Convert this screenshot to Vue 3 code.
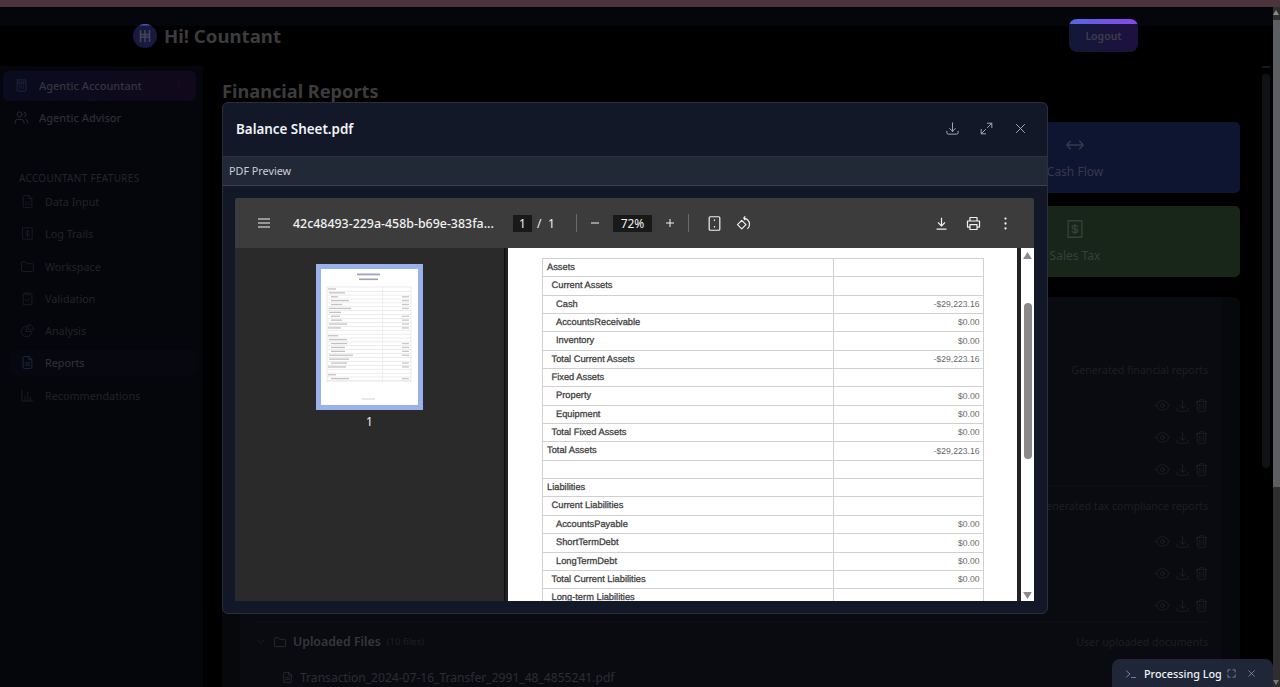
<template>
  <div class="strip"></div>
  <div class="page">
    <div class="shell">
      <header class="topbar">
        <div class="brand">
          <svg class="brand-logo" viewBox="0 0 24 24">
            <circle cx="12" cy="12" r="12" fill="#17193f" />
            <path d="M6 1.600a12 12 0 0 1 12 0z" fill="#4f55c0" />
            <path d="M7.500 6v12M12 6v12M16.500 6v12M7.500 10.500h9M7.500 13h9" stroke="#43445a" stroke-width="1.500" fill="none" />
          </svg>
          <span class="brand-name">Hi! Countant</span>
        </div>
        <button class="logout">Logout</button>
      </header>

      <div class="body">
        <aside class="sidebar">
          <div v-for="item in topNav" :key="item.label" class="nav-top" :class="{ active: item.active }">
            <svg class="icon nav-icon" viewBox="0 0 24 24"><path :d="icons[item.icon]" /></svg>
            <span>{{ item.label }}</span>
            <svg v-if="item.active" class="icon nav-chevron" viewBox="0 0 24 24"><path d="m9 5 7 7-7 7" /></svg>
          </div>
          <div class="nav-section">ACCOUNTANT FEATURES</div>
          <div v-for="item in features" :key="item.label" class="nav-item" :class="{ active: item.active }">
            <svg class="icon nav-icon" viewBox="0 0 24 24"><path :d="icons[item.icon]" /></svg>
            <span>{{ item.label }}</span>
          </div>
        </aside>

        <main class="main">
          <div class="content">
            <h1 class="page-title">Financial Reports</h1>
            <div class="cards">
              <div class="card"></div>
              <div class="card"></div>
              <div class="card blue">
                <svg class="icon card-icon" viewBox="0 0 24 24"><path d="M7 8l-4 4 4 4M17 8l4 4-4 4M3 12h18" /></svg>
                <span>Cash Flow</span>
              </div>
              <div class="card"></div>
              <div class="card"></div>
              <div class="card green">
                <svg class="icon card-icon" viewBox="0 0 24 24"><path :d="icons.dollarDoc" /></svg>
                <span>Sales Tax</span>
              </div>
            </div>

            <section class="panel">
              <div class="panel-inner">
                <div v-for="group in groups" :key="group.note" class="group">
                  <div class="group-head">
                    <template v-if="group.title">
                      <svg class="icon group-chevron" viewBox="0 0 24 24"><path d="m5 9 7 7 7-7" /></svg>
                      <svg class="icon group-folder" viewBox="0 0 24 24"><path :d="icons.folder" /></svg>
                      <span class="group-title">{{ group.title }}</span>
                      <span class="group-count">{{ group.count }}</span>
                    </template>
                    <span class="group-note">{{ group.note }}</span>
                  </div>
                  <div v-for="row in group.rows" :key="row" class="file-row">
                    <div class="actions">
                      <svg class="icon" viewBox="0 0 24 24"><path :d="icons.eye" /></svg>
                      <svg class="icon" viewBox="0 0 24 24"><path :d="icons.download" /></svg>
                      <svg class="icon" viewBox="0 0 24 24"><path :d="icons.trash" /></svg>
                    </div>
                  </div>
                  <div v-if="group.file" class="file-row uploaded">
                    <svg class="icon file-icon" viewBox="0 0 24 24"><path :d="icons.docText" /></svg>
                    <span>{{ group.file }}</span>
                  </div>
                </div>
              </div>
            </section>
          </div>
          <div class="main-scroll">
            <div class="main-scroll-cap"></div>
            <div class="main-scroll-thumb"></div>
          </div>
        </main>
      </div>
    </div>

    <div class="page-scroll">
      <div class="page-scroll-up"></div>
      <div class="page-scroll-thumb"></div>
      <div class="page-scroll-arrow"></div>
    </div>

    <div class="modal">
      <div class="modal-head">
        <h2 class="modal-title">Balance Sheet.pdf</h2>
        <div class="modal-actions">
          <svg class="icon" viewBox="0 0 24 24"><path :d="icons.download" /></svg>
          <svg class="icon" viewBox="0 0 24 24"><path d="M13.500 3.500h7v7M20.500 3.500l-7 7M10.500 20.500h-7v-7M3.500 20.500l7-7" /></svg>
          <svg class="icon" viewBox="0 0 24 24"><path d="M5.500 5.500l13 13M18.500 5.500l-13 13" /></svg>
        </div>
      </div>
      <div class="modal-band">PDF Preview</div>

      <div class="modal-body">
        <div class="viewer">
          <div class="toolbar">
            <div class="tb-left">
              <svg class="tb-icon menu" viewBox="0 0 24 24"><path d="M3 6h18M3 12h18M3 18h18" /></svg>
              <span class="doc-name">42c48493-229a-458b-b69e-383fa...</span>
            </div>
            <div class="tb-center">
              <span class="tb-box page-box">1</span>
              <span class="tb-slash">/</span>
              <span class="tb-total">1</span>
              <span class="tb-sep first"></span>
              <svg class="tb-icon small minus" viewBox="0 0 24 24"><path d="M4 12h16" /></svg>
              <span class="tb-box zoom-box">72%</span>
              <svg class="tb-icon small plus" viewBox="0 0 24 24"><path d="M4 12h16M12 4v16" /></svg>
              <span class="tb-sep second"></span>
              <svg class="tb-icon fit" viewBox="0 0 24 24"><rect x="4.500" y="2.500" width="15" height="19" rx="1.500" /><path d="M12 6.500v2M12 15.500v2" /></svg>
              <svg class="tb-icon rotate" viewBox="0 0 24 24"><path d="M9.500 7.500 3.500 13.500l6 6 6-6zM12 4.500a8.500 8.500 0 0 1 8.500 8.500 8.500 8.500 0 0 1-3 6.500M12 4.500l2.500-2.500M12 4.500 14.500 7" /></svg>
            </div>
            <div class="tb-right">
              <svg class="tb-icon" viewBox="0 0 24 24"><path d="M12 4v11M7 10.500l5 5 5-5M5 20h14" /></svg>
              <svg class="tb-icon" viewBox="0 0 24 24"><path d="M7 8V3.500h10V8M7 17H3.500V8.500h17V17H17M7 13.500h10v7H7z" /></svg>
              <svg class="tb-icon dots" viewBox="0 0 24 24"><circle cx="12" cy="5" r="1.600" /><circle cx="12" cy="12" r="1.600" /><circle cx="12" cy="19" r="1.600" /></svg>
            </div>
          </div>

          <div class="viewer-body">
            <div class="thumbs">
              <div class="thumb">
                <svg class="thumb-page" viewBox="0 0 97 136">
                  <rect x="36" y="4.500" width="23" height="1.800" fill="#9ea3c0" />
                  <rect x="38" y="9.500" width="19" height="1.600" fill="#a0a0a0" />
                  <rect x="6" y="18" width="84" height="94" fill="none" stroke="#dcdcdc" stroke-width="0.600" />
                  <rect x="61" y="18" width="0.500" height="94" fill="#e2e2e2" />
                  <g v-for="(w, n) in thumbRows" :key="n">
                    <rect x="6" :y="21.900 + n * 3.900" width="84" height="0.600" fill="#dedede" />
                    <rect :x="w[0]" :y="19.300 + n * 3.900" :width="w[1]" height="1.300" fill="#c2c2c2" />
                    <rect v-if="w[2]" x="81" :y="19.300 + n * 3.900" width="7" height="1.300" fill="#c8c8c8" />
                  </g>
                  <rect x="41" y="129.500" width="13" height="1" fill="#d2d2d2" />
                </svg>
              </div>
              <div class="thumb-num">1</div>
            </div>
            <div class="doc-area">
              <div class="doc-page">
                <table class="sheet">
                  <tbody>
                    <tr v-for="(row, i) in sheet" :key="i">
                      <td class="sheet-label" :class="'lv' + row.level">{{ row.label }}</td>
                      <td class="sheet-value">{{ row.value }}</td>
                    </tr>
                  </tbody>
                </table>
              </div>
              <div class="doc-scroll">
                <svg class="doc-arrow" viewBox="0 0 10 8"><path d="M5 0l5 8H0z" /></svg>
                <div class="doc-track"><div class="doc-thumb"></div></div>
                <svg class="doc-arrow" viewBox="0 0 10 8"><path d="M0 0h10L5 8z" /></svg>
              </div>
            </div>
          </div>
        </div>
      </div>
    </div>

    <div class="log">
      <svg class="icon log-term" viewBox="0 0 24 24"><path d="m3 6 7 6-7 6M13 19h8" /></svg>
      <span class="log-text">Processing Log</span>
      <svg class="icon log-btn" viewBox="0 0 24 24"><path d="M4 9V4h5M15 4h5v5M20 15v5h-5M9 20H4v-5" /></svg>
      <svg class="icon log-btn" viewBox="0 0 24 24"><path d="M6 6l12 12M18 6 6 18" /></svg>
    </div>
  </div>
</template>

<script setup>
const icons = {
  calculator: 'M6 3h12a1 1 0 0 1 1 1v16a1 1 0 0 1-1 1H6a1 1 0 0 1-1-1V4a1 1 0 0 1 1-1zM8 6.500h8v3H8zM8.500 13h1M11.500 13h1M14.500 13h1M8.500 16h1M11.500 16h1M14.500 16h1',
  users: 'M16 21v-2a4 4 0 0 0-4-4H6a4 4 0 0 0-4 4v2M13 7a4 4 0 1 1-8 0 4 4 0 0 1 8 0zM22 21v-2a4 4 0 0 0-3-3.870M16 3.130a4 4 0 0 1 0 7.750',
  dataDoc: 'M14 2.500H7a2 2 0 0 0-2 2v15a2 2 0 0 0 2 2h10a2 2 0 0 0 2-2V7.500zM14 2.500V7.500h5M9 13h1.500M13.500 13H15M9 17h1.500M13.500 17H15',
  dollarDoc: 'M4.500 3h15v18h-15zM12 7v10M15 9.500c-.600-1-1.700-1.500-3-1.500-1.700 0-3 .800-3 2s1.300 1.800 3 2 3 .800 3 2-1.300 2-3 2c-1.300 0-2.400-.500-3-1.500',
  folder: 'M2.500 18.500V6a1.500 1.500 0 0 1 1.500-1.500h5l2.500 3H20a1.500 1.500 0 0 1 1.500 1.500v9.500A1.500 1.500 0 0 1 20 20H4a1.500 1.500 0 0 1-1.500-1.500z',
  clipboard: 'M9 4H6.500A1.500 1.500 0 0 0 5 5.500v15A1.500 1.500 0 0 0 6.500 22h11a1.500 1.500 0 0 0 1.500-1.500v-15A1.500 1.500 0 0 0 17.500 4H15M9 3h6v3H9zM9 14l2 2 4-4.500',
  pie: 'M10.500 5a8.500 8.500 0 1 0 8.500 8.500h-8.500zM14 2.500A7.500 7.500 0 0 1 21.500 10H14z',
  docText: 'M14 2.500H7a2 2 0 0 0-2 2v15a2 2 0 0 0 2 2h10a2 2 0 0 0 2-2V7.500zM14 2.500V7.500h5M8.500 12.500h7M8.500 16h7',
  chart: 'M3 3v18h18M8 20v-7M12.500 20V7M17 20v-5',
  eye: 'M2.036 12.322a1.012 1.012 0 0 1 0-.639C3.423 7.51 7.36 4.5 12 4.5c4.638 0 8.573 3.007 9.963 7.178.07.207.07.431 0 .639C20.577 16.49 16.64 19.5 12 19.5c-4.638 0-8.573-3.007-9.963-7.178ZM15 12a3 3 0 1 1-6 0 3 3 0 0 1 6 0Z',
  download: 'M3 16.500v2.250A2.250 2.250 0 0 0 5.250 21h13.500A2.250 2.250 0 0 0 21 18.750V16.500M16.500 12 12 16.500m0 0L7.500 12m4.500 4.500V3',
  trash: 'M14.74 9l-.346 9m-4.788 0L9.26 9m9.968-3.21c.342.052.682.107 1.022.166m-1.022-.165L18.16 19.673a2.25 2.25 0 0 1-2.244 2.077H8.084a2.25 2.25 0 0 1-2.244-2.077L4.772 5.79m14.456 0a48.108 48.108 0 0 0-3.478-.397m-12 .562c.34-.059.68-.114 1.022-.165m0 0a48.11 48.11 0 0 1 3.478-.397m7.5 0v-.916c0-1.18-.91-2.164-2.09-2.201a51.964 51.964 0 0 0-3.32 0c-1.18.037-2.09 1.022-2.09 2.201v.916m7.5 0a48.667 48.667 0 0 0-7.5 0'
}

const topNav = [
  { label: 'Agentic Accountant', icon: 'calculator', active: true },
  { label: 'Agentic Advisor', icon: 'users' }
]

const features = [
  { label: 'Data Input', icon: 'dataDoc' },
  { label: 'Log Trails', icon: 'dollarDoc' },
  { label: 'Workspace', icon: 'folder' },
  { label: 'Validation', icon: 'clipboard' },
  { label: 'Analysis', icon: 'pie' },
  { label: 'Reports', icon: 'docText', active: true },
  { label: 'Recommendations', icon: 'chart' }
]

const groups = [
  { note: 'Generated financial reports', rows: [1, 2, 3] },
  { note: 'Generated tax compliance reports', rows: [1, 2, 3] },
  {
    title: 'Uploaded Files',
    count: '(10 files)',
    note: 'User uploaded documents',
    rows: [],
    file: 'Transaction_2024-07-16_Transfer_2991_48_4855241.pdf'
  }
]

// the preview page: [left, width, has a value]
const thumbRows = [
  [7, 8, 0], [8, 16, 0], [10, 7, 1], [10, 18, 1], [10, 11, 1], [8, 22, 1],
  [8, 12, 0], [10, 9, 1], [10, 11, 1], [8, 18, 1], [7, 13, 1], [7, 0, 0],
  [7, 10, 0], [8, 18, 0], [10, 16, 1], [10, 14, 1], [10, 14, 1], [8, 24, 1],
  [8, 20, 0], [10, 16, 1], [7, 18, 1], [7, 0, 0], [7, 8, 0], [10, 18, 1]
]

const sheet = [
  { label: 'Assets', level: 0, value: '' },
  { label: 'Current Assets', level: 1, value: '' },
  { label: 'Cash', level: 2, value: '-$29,223.16' },
  { label: 'AccountsReceivable', level: 2, value: '$0.00' },
  { label: 'Inventory', level: 2, value: '$0.00' },
  { label: 'Total Current Assets', level: 1, value: '-$29,223.16' },
  { label: 'Fixed Assets', level: 1, value: '' },
  { label: 'Property', level: 2, value: '$0.00' },
  { label: 'Equipment', level: 2, value: '$0.00' },
  { label: 'Total Fixed Assets', level: 1, value: '$0.00' },
  { label: 'Total Assets', level: 0, value: '-$29,223.16' },
  { label: '', level: 0, value: '' },
  { label: 'Liabilities', level: 0, value: '' },
  { label: 'Current Liabilities', level: 1, value: '' },
  { label: 'AccountsPayable', level: 2, value: '$0.00' },
  { label: 'ShortTermDebt', level: 2, value: '$0.00' },
  { label: 'LongTermDebt', level: 2, value: '$0.00' },
  { label: 'Total Current Liabilities', level: 1, value: '$0.00' },
  { label: 'Long-term Liabilities', level: 1, value: '' }
]
</script>

<style>
html,
body {
  margin: 0;
  background: #000;
  overflow: hidden;
}
</style>

<style scoped>
* {
  box-sizing: border-box;
}

.icon {
  fill: none;
  stroke: currentColor;
  stroke-width: 1.5;
  stroke-linecap: round;
  stroke-linejoin: round;
  flex: none;
}

.strip {
  height: 7px;
  background: #4c343c;
}

.page {
  position: relative;
  display: flex;
  height: 680px;
  overflow: hidden;
  font-family: "Noto Sans", "Open Sans", sans-serif;
  background: #000;
}

.shell {
  flex: 1;
  min-width: 0;
}

.page-scroll {
  width: 7px;
  background: #2e2e2e;
  position: relative;
  padding-top: 13px;
}

.page-scroll-up {
  position: absolute;
  top: 3px;
  left: 0;
  border-left: 3.5px solid transparent;
  border-right: 3.5px solid transparent;
  border-bottom: 5px solid #8a8a8a;
}

.page-scroll-thumb {
  height: 467px;
  background: #5c5e62;
}

.page-scroll-arrow {
  position: absolute;
  bottom: 2px;
  left: 0;
  border-left: 3.5px solid transparent;
  border-right: 3.5px solid transparent;
  border-top: 5px solid #777;
}

/* header */
.topbar {
  height: 59px;
  display: flex;
  justify-content: space-between;
  align-items: flex-start;
  padding: 12px 135px 0 133px;
  background: linear-gradient(#05060c 19px, #000 19px);
}

.brand {
  display: flex;
  align-items: center;
  gap: 7px;
  margin-top: 4px;
}

.brand-logo {
  width: 24px;
  height: 24px;
}

.brand-name {
  font-size: 18.6px;
  font-weight: 700;
  color: #3c3c3e;
}

.logout {
  position: relative;
  width: 69px;
  height: 33px;
  border: 0;
  border-radius: 8px;
  padding: 0;
  overflow: hidden;
  font: 600 10.5px "Noto Sans", sans-serif;
  color: #3d3d4a;
  background: linear-gradient(90deg, #121838, #1e1040);
}

.logout::before {
  content: "";
  position: absolute;
  left: 0;
  right: 0;
  top: 0;
  height: 5px;
  background: linear-gradient(90deg, #5468e0, #8a46e8);
}

/* sidebar + main */
.body {
  display: flex;
  height: 621px;
}

.sidebar {
  width: 203px;
  flex: none;
  padding: 5px 7px 0 3px;
  background: #05060b;
}

.nav-top {
  display: flex;
  align-items: center;
  height: 30px;
  padding: 0 0 2px 11px;
  gap: 10px;
  margin-bottom: 2px;
  font-size: 11px;
  font-weight: 500;
  color: #2c2d36;
  border-radius: 6px;
}

.nav-top.active {
  background: linear-gradient(90deg, #0a0b1e, #11091b);
  color: #34353e;
}

.nav-top .nav-icon {
  width: 15px;
  height: 15px;
}

.nav-top.active .nav-icon {
  color: #20263e;
}

.nav-chevron {
  width: 10px;
  height: 10px;
  margin-left: auto;
  margin-right: 12px;
  color: #1c1c28;
}

.nav-section {
  margin: 36px 0 1.5px 16px;
  height: 18px;
  line-height: 18px;
  font-size: 10px;
  letter-spacing: 0.3px;
  color: #24252c;
}

.nav-item {
  display: flex;
  align-items: center;
  gap: 10px;
  height: 26px;
  margin: 0 0 6.25px 7px;
  padding-left: 10px;
  font-size: 10.8px;
  color: #212228;
  border-radius: 6px;
}

.nav-item .nav-icon {
  width: 15px;
  height: 15px;
  color: #1c1d24;
}

.nav-item.active {
  background: #07080f;
  color: #32333c;
}

.nav-item.active .nav-icon {
  color: #1d2a44;
}

.main {
  flex: 1;
  min-width: 0;
  display: flex;
  gap: 22px;
  padding: 0 3px 0 19px;
}

.content {
  flex: 1;
  min-width: 0;
}

.page-title {
  margin: 12px 0 18px;
  height: 26px;
  line-height: 26px;
  font-size: 18.2px;
  font-weight: 700;
  color: #3c3c3e;
}

.cards {
  display: grid;
  grid-template-columns: repeat(3, 1fr);
  grid-auto-rows: 71px;
  gap: 13px 14px;
}

.card {
  display: flex;
  flex-direction: column;
  align-items: center;
  justify-content: center;
  gap: 7px;
  padding-bottom: 2px;
  border-radius: 5px;
  font-size: 12px;
}

.card.blue {
  background: #0e1530;
  color: #363a4a;
}

.card.green {
  background: #18261a;
  color: #35403a;
}

.card-icon {
  width: 22px;
  height: 22px;
}

.panel {
  margin-top: 20px;
  padding: 0 18px;
  background: #07080c;
  border-radius: 6px;
}

.panel-inner {
  padding: 54px 14px 0 15px;
  background: #0a0b10;
  min-height: 400px;
}

.group {
  border-bottom: 1px solid #0e0f15;
  margin-bottom: 1px;
}

.group-head {
  height: 38px;
  display: flex;
  align-items: center;
  padding-bottom: 1px;
}

.group-chevron {
  width: 11px;
  height: 11px;
  color: #25262c;
  margin-right: 7px;
}

.group-folder {
  width: 14px;
  height: 14px;
  color: #2a2b31;
  margin-right: 6px;
}

.group-title {
  font-size: 12.3px;
  font-weight: 600;
  color: #35363c;
}

.group-count {
  margin-left: 6px;
  font-size: 9.5px;
  color: #1e1f25;
}

.group-note {
  margin-left: auto;
  font-size: 10.6px;
  color: #1d1e23;
}

.file-row {
  height: 32px;
  display: flex;
  align-items: center;
}

.actions {
  margin-left: auto;
  margin-right: -1px;
  display: flex;
  gap: 4.5px;
  color: #1e1f24;
}

.actions .icon {
  width: 15px;
  height: 15px;
}

.uploaded {
  padding-left: 26px;
  gap: 6px;
  font-size: 12.08px;
  color: #2c2d33;
}

.file-icon {
  width: 13px;
  height: 13px;
}

.main-scroll {
  width: 8px;
  flex: none;
  display: flex;
  flex-direction: column;
  gap: 6px;
}

.main-scroll-cap {
  height: 2px;
  background: #17181c;
}

.main-scroll-thumb {
  height: 394px;
  background: #101115;
  border-radius: 4px;
}

/* modal */
.modal {
  position: absolute;
  left: 222px;
  top: 95px;
  width: 826px;
  height: 512px;
  display: flex;
  flex-direction: column;
  background: #131829;
  border: 1px solid #2a2f3c;
  border-radius: 6px;
  overflow: hidden;
}

.modal-head {
  height: 53px;
  flex: none;
  display: flex;
  align-items: center;
  justify-content: space-between;
  padding: 0 19.5px 2px 13px;
}

.modal-title {
  margin: 0;
  font-size: 13.4px;
  font-weight: 600;
  color: #f1f3f6;
}

.modal-actions {
  display: flex;
  gap: 19px;
  color: #aab0bc;
}

.modal-actions .icon {
  width: 15px;
  height: 15px;
}

.modal-band {
  height: 30px;
  flex: none;
  display: flex;
  align-items: center;
  padding: 0 0 2px 6px;
  font-size: 10.8px;
  color: #c9ced6;
  background: #222936;
  border-top: 1px solid #2a3140;
  border-bottom: 1px solid #3a4150;
}

.modal-body {
  flex: 1;
  min-height: 0;
  padding: 12px 13px 12px 12px;
}

.viewer {
  height: 403px;
  display: flex;
  flex-direction: column;
  overflow: hidden;
  border-radius: 2px 2px 0 0;
}

.toolbar {
  position: relative;
  height: 50px;
  flex: none;
  display: flex;
  align-items: center;
  justify-content: space-between;
  background: #3c3c3c;
  color: #f1f1f1;
  font-size: 13px;
}

.tb-icon {
  width: 17px;
  height: 17px;
  fill: none;
  stroke: #f1f1f1;
  stroke-width: 1.7;
  stroke-linejoin: round;
  flex: none;
}

.tb-icon.small {
  width: 12px;
  height: 12px;
  stroke-width: 2;
}

.tb-icon.dots {
  fill: #f1f1f1;
  stroke: none;
}

.tb-left {
  display: flex;
  align-items: center;
  padding-left: 21px;
  gap: 21px;
}

.menu {
  width: 16px;
  height: 16px;
}

.doc-name {
  font-weight: 500;
  font-size: 12.4px;
  padding-top: 1px;
}

.tb-center {
  position: absolute;
  left: 278px;
  display: flex;
  align-items: center;
  height: 100%;
}

.tb-box {
  display: flex;
  align-items: center;
  justify-content: center;
  height: 17px;
  background: #191919;
  font-size: 12px;
}

.page-box {
  width: 19px;
}

.tb-slash {
  margin-left: 5px;
  width: 11px;
  font-size: 12px;
}

.tb-total {
  margin-left: -1px;
  width: 23px;
  padding-left: 1px;
  font-size: 12px;
}

.tb-sep {
  width: 1px;
  height: 18px;
  background: #6a6a6a;
}

.tb-sep.first {
  margin-left: 6px;
}

.minus {
  margin: 0 12px;
}

.zoom-box {
  width: 39px;
}

.plus {
  margin: 0 12px;
}

.fit {
  margin-left: 17px;
}

.rotate {
  margin-left: 12px;
}

.tb-right {
  display: flex;
  align-items: center;
  gap: 15px;
  padding-right: 20px;
}

.viewer-body {
  flex: 1;
  min-height: 0;
  display: flex;
}

.thumbs {
  width: 270px;
  flex: none;
  background: #2a2a2a;
  padding-top: 16px;
  border-right: 1px solid #111;
}

.thumb {
  width: 107px;
  height: 146px;
  margin: 0 auto;
  padding: 5px;
  background: #9ab2ec;
}

.thumb-page {
  display: block;
  width: 97px;
  height: 136px;
  background: #fff;
}

.thumb-num {
  margin-top: 3px;
  text-align: center;
  font-size: 12px;
  color: #f1f1f1;
}

.doc-area {
  flex: 1;
  min-width: 0;
  display: flex;
  background: #222;
  padding: 0 0 0 3px;
}

.doc-page {
  width: 509px;
  flex: none;
  background: #fff;
  padding: 10px 0 0 34px;
  overflow: hidden;
}

.sheet {
  width: 442px;
  border-collapse: collapse;
  table-layout: fixed;
  font-family: "Liberation Sans", Arial, sans-serif;
  text-rendering: geometricPrecision;
}

.sheet td {
  height: 18.35px;
  padding: 0 3.5px 0 4px;
  border: 1px solid #d0d0d0;
  line-height: 1;
  white-space: nowrap;
}

.sheet-label {
  width: 291px;
  font-size: 9.3px;
  color: #444;
  -webkit-text-stroke: 0.3px #444;
}

.sheet-label.lv1 {
  padding-left: 8.5px;
}

.sheet-label.lv2 {
  padding-left: 13px;
}

.sheet-value {
  text-align: right;
  font-size: 8.6px;
  color: #666;
}

.doc-scroll {
  width: 13px;
  flex: none;
  margin-left: 4px;
  background: #fff;
  display: flex;
  flex-direction: column;
  align-items: center;
  padding: 4px 0 2px;
  gap: 3px;
}

.doc-arrow {
  width: 9px;
  height: 7px;
  fill: #8a8a8a;
  flex: none;
}

.doc-track {
  flex: 1;
  padding-top: 41px;
}

.doc-thumb {
  width: 8px;
  height: 156px;
  background: #8a8a8a;
  border-radius: 4px;
}

/* processing log */
.log {
  position: absolute;
  right: 7px;
  bottom: 0;
  width: 161px;
  height: 28px;
  display: flex;
  align-items: center;
  padding: 1px 0 0 13px;
  background: #1f2637;
  border-radius: 8px 8px 0 0;
}

.log-term {
  width: 12px;
  height: 12px;
  color: #8a9de8;
}

.log-text {
  margin-left: 7px;
  font-size: 10.8px;
  font-weight: 500;
  color: #f1f3f6;
}

.log-btn {
  width: 11px;
  height: 11px;
  margin-left: 4px;
  color: #9aa0ad;
}

.log-btn:last-child {
  margin-left: 9px;
}
</style>
